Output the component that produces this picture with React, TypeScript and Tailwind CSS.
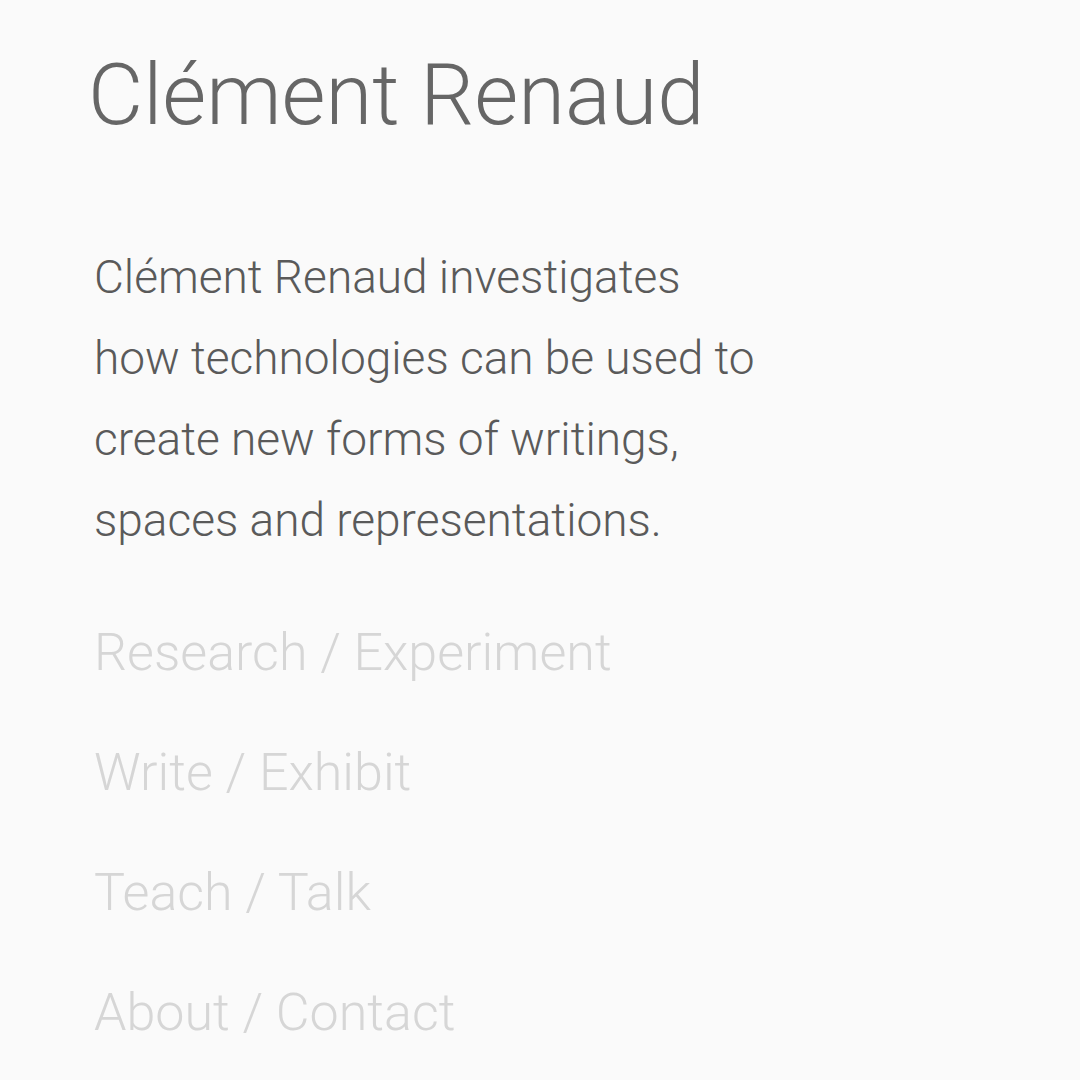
const links = ['Research / Experiment', 'Write / Exhibit', 'Teach / Talk', 'About / Contact'];

export default function App() {
  return (
    <div className="min-h-screen w-full bg-[#fafafa] font-['Roboto',sans-serif] font-light">
      <div className="pl-[94px] pt-[45px]">
        <h1 className="-ml-[6px] text-[85px] leading-[100px] text-[#666666] font-light">Clément Renaud</h1>

        <p className="mt-[92px] w-[700px] text-[46px] leading-[81px] text-[#5a5a5a] font-light">
          Clément Renaud investigates
          <br />
          how technologies can be used to
          <br />
          create new forms of writings,
          <br />
          spaces and representations.
        </p>

        <nav className="mt-[32px] flex flex-col">
          {links.map((l) => (
            <a key={l} href="#" className="text-[52px] leading-[120px] text-[#d6d6d6] font-light">
              {l}
            </a>
          ))}
        </nav>
      </div>
    </div>
  );
}
